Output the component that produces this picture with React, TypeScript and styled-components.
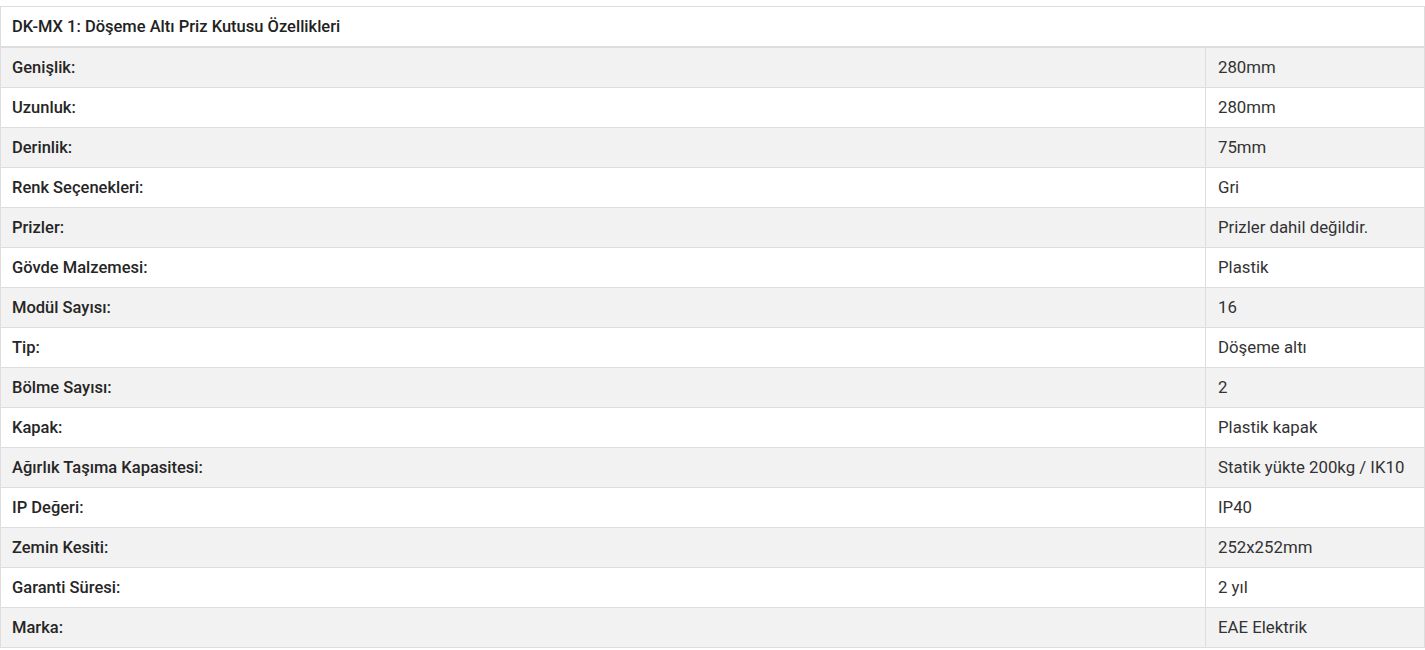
import React from "react";
import styled, { createGlobalStyle } from "styled-components";

const Global = createGlobalStyle`
  html, body { margin: 0; padding: 0; background: #fff; }
  body { padding-top: 6px; font-family: Roboto, "Liberation Sans", Arial, sans-serif; }
`;

const Table = styled.table`
  width: 1425px;
  border-collapse: collapse;
  border: 1px solid #dddddd;
  font-size: 16.5px;
  line-height: 20px;
`;

const HeadCell = styled.th`
  text-align: left;
  font-weight: 500;
  color: #222;
  padding: 10px 11px 9px;
  height: 20px;
  border-bottom: 2px solid #dddddd;
`;

const Row = styled.tr<{ $striped: boolean }>`
  background: ${(p) => (p.$striped ? "#f2f2f2" : "#ffffff")};
`;

const Label = styled.td`
  font-weight: 500;
  color: #262626;
  padding: 10px 11px 9px;
  height: 20px;
  border-top: 1px solid #dddddd;
`;

const Value = styled.td`
  width: 194px;
  font-size: 16.8px;
  color: #333;
  padding: 9px 12px 10px;
  height: 20px;
  border: 1px solid #dddddd;
`;

const rows: [string, string][] = [
  ["Genişlik:", "280mm"],
  ["Uzunluk:", "280mm"],
  ["Derinlik:", "75mm"],
  ["Renk Seçenekleri:", "Gri"],
  ["Prizler:", "Prizler dahil değildir."],
  ["Gövde Malzemesi:", "Plastik"],
  ["Modül Sayısı:", "16"],
  ["Tip:", "Döşeme altı"],
  ["Bölme Sayısı:", "2"],
  ["Kapak:", "Plastik kapak"],
  ["Ağırlık Taşıma Kapasitesi:", "Statik yükte 200kg / IK10"],
  ["IP Değeri:", "IP40"],
  ["Zemin Kesiti:", "252x252mm"],
  ["Garanti Süresi:", "2 yıl"],
  ["Marka:", "EAE Elektrik"],
];

export default function App() {
  return (
    <>
      <Global />
      <Table>
        <thead>
          <tr>
            <HeadCell colSpan={2}>DK-MX 1: Döşeme Altı Priz Kutusu Özellikleri</HeadCell>
          </tr>
        </thead>
        <tbody>
          {rows.map(([l, v], i) => (
            <Row key={l} $striped={i % 2 === 0}>
              <Label>{l}</Label>
              <Value>{v}</Value>
            </Row>
          ))}
        </tbody>
      </Table>
    </>
  );
}
